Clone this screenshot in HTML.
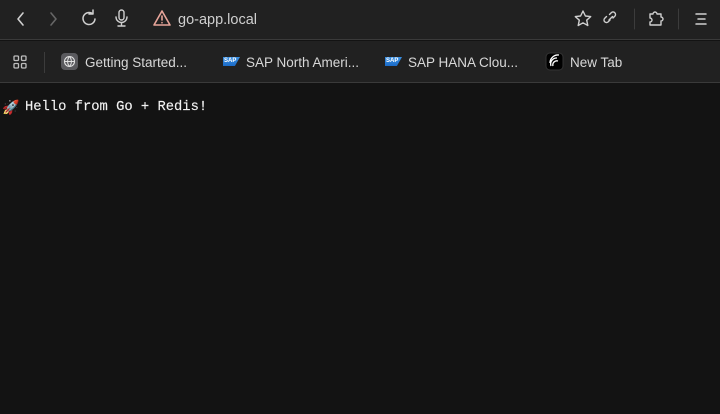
<!DOCTYPE html>
<html><head><meta charset="utf-8"><style>
*{margin:0;padding:0;box-sizing:border-box}
body{width:720px;height:414px;background:#131313;font-family:"Liberation Sans",sans-serif;position:relative;overflow:hidden}
.top{position:absolute;left:0;top:0;width:720px;height:40px;background:#212121;border-bottom:1px solid #3a3a3a}
.bm{position:absolute;left:0;top:41px;width:720px;height:42px;background:#212121;border-bottom:1px solid #3a3a3a}
.t{position:absolute;color:#d8d8d8;font-size:13.5px}
svg{position:absolute}
.sap{position:absolute;width:17px;height:9px;background:linear-gradient(#3a8fe0,#1a6bc8);clip-path:polygon(0 0,100% 0,70% 100%,0 100%);color:#fff;font-size:6px;font-weight:bold;line-height:9px;padding-left:1px}
.main{position:absolute;left:25px;top:100px;color:#f2f2f2;font-family:"Liberation Mono",monospace;font-size:13.8px;-webkit-text-stroke:0.15px #f2f2f2}
</style></head><body>
<div class="top">
<svg width="720" height="40" fill="none" stroke-linecap="round" stroke-linejoin="round">
<path d="M23 13l-5 6 5 6" stroke="#cfcfcf" stroke-width="1.6"/>
<path d="M51 13l5 6-5 6" stroke="#666" stroke-width="1.6"/>
<path d="M93 14a6 6 0 1 0 2 5M93 10v4h-4" stroke="#cfcfcf" stroke-width="1.5"/>
<rect x="119" y="10" width="5" height="10" rx="2.5" stroke="#cfcfcf" stroke-width="1.4"/>
<path d="M116 17a5.5 5.5 0 0 0 11 0M121.5 23v3M118 26h7" stroke="#cfcfcf" stroke-width="1.4"/>
<path d="M162 11l8 14h-16z" stroke="#e8a59a" stroke-width="1.6"/>
<path d="M162 16v4M162 22.5v.3" stroke="#e8a59a" stroke-width="1.6"/>
<path d="M583 11l2.4 5 5.3.6-4 3.6 1.1 5.3-4.8-2.7-4.8 2.7 1.1-5.3-4-3.6 5.3-.6z" stroke="#cfcfcf" stroke-width="1.4"/>
<path d="M610 20l-2 2a2.5 2.5 0 0 1-3.5-3.5l2-2M613 18l2-2a2.5 2.5 0 0 0-3.5-3.5l-2 2M609 20l3.5-3.5" stroke="#cfcfcf" stroke-width="1.4"/>
<line x1="634.5" y1="9" x2="634.5" y2="29" stroke="#3c3c3c"/>
<path d="M650 14h3a2 2 0 1 1 4 0h4v3a2 2 0 1 1 0 4v4h-11v-3a2 2 0 1 0 0-4z" stroke="#cfcfcf" stroke-width="1.4"/>
<line x1="678.5" y1="9" x2="678.5" y2="29" stroke="#3c3c3c"/>
<path d="M696 14h10M698 19h7M696 24h10" stroke="#cfcfcf" stroke-width="1.5"/>
</svg>
<div class="t" style="left:178px;top:12px;font-size:14.5px;color:#cfcfcf">go-app.local</div>
</div>
<div class="bm">
<svg width="720" height="42" fill="none">
<g stroke="#bdbdbd" stroke-width="1.3"><rect x="14" y="15" width="4.5" height="4.5" rx="1"/><rect x="21.5" y="15" width="4.5" height="4.5" rx="1"/><rect x="14" y="22.5" width="4.5" height="4.5" rx="1"/><rect x="21.5" y="22.5" width="4.5" height="4.5" rx="1"/></g>
<line x1="44.5" y1="11" x2="44.5" y2="32" stroke="#3c3c3c"/>
<rect x="61" y="12" width="17" height="17" rx="4" fill="#5a5a5e"/>
<circle cx="69.5" cy="20.5" r="5" stroke="#e0e0e0" stroke-width="1.1"/>
<path d="M64.5 20.5h10M69.5 15.5c-2.5 3-2.5 7 0 10M69.5 15.5c2.5 3 2.5 7 0 10" stroke="#e0e0e0" stroke-width="1"/>
<rect x="546" y="12" width="17" height="17" rx="4" fill="#000" stroke="#333"/>
<path d="M551 25a6 6 0 0 1 6-8M553 25a4 4 0 0 1 5-5M550 22a8 8 0 0 1 9-8" stroke="#fff" stroke-width="1.3"/>
</svg>
<div class="t" style="left:85px;top:14px">Getting Started...</div>
<div class="sap" style="left:223px;top:16px">SAP</div>
<div class="t" style="left:246px;top:14px">SAP North Ameri...</div>
<div class="sap" style="left:385px;top:16px">SAP</div>
<div class="t" style="left:408px;top:14px">SAP HANA Clou...</div>
<div class="t" style="left:570px;top:14px">New Tab</div>
</div>
<div style="position:absolute;left:2px;top:100px;font-size:14px;font-family:'Noto Color Emoji','DejaVu Sans',sans-serif">🚀</div>
<div class="main">Hello from Go + Redis!</div>
</body></html>
